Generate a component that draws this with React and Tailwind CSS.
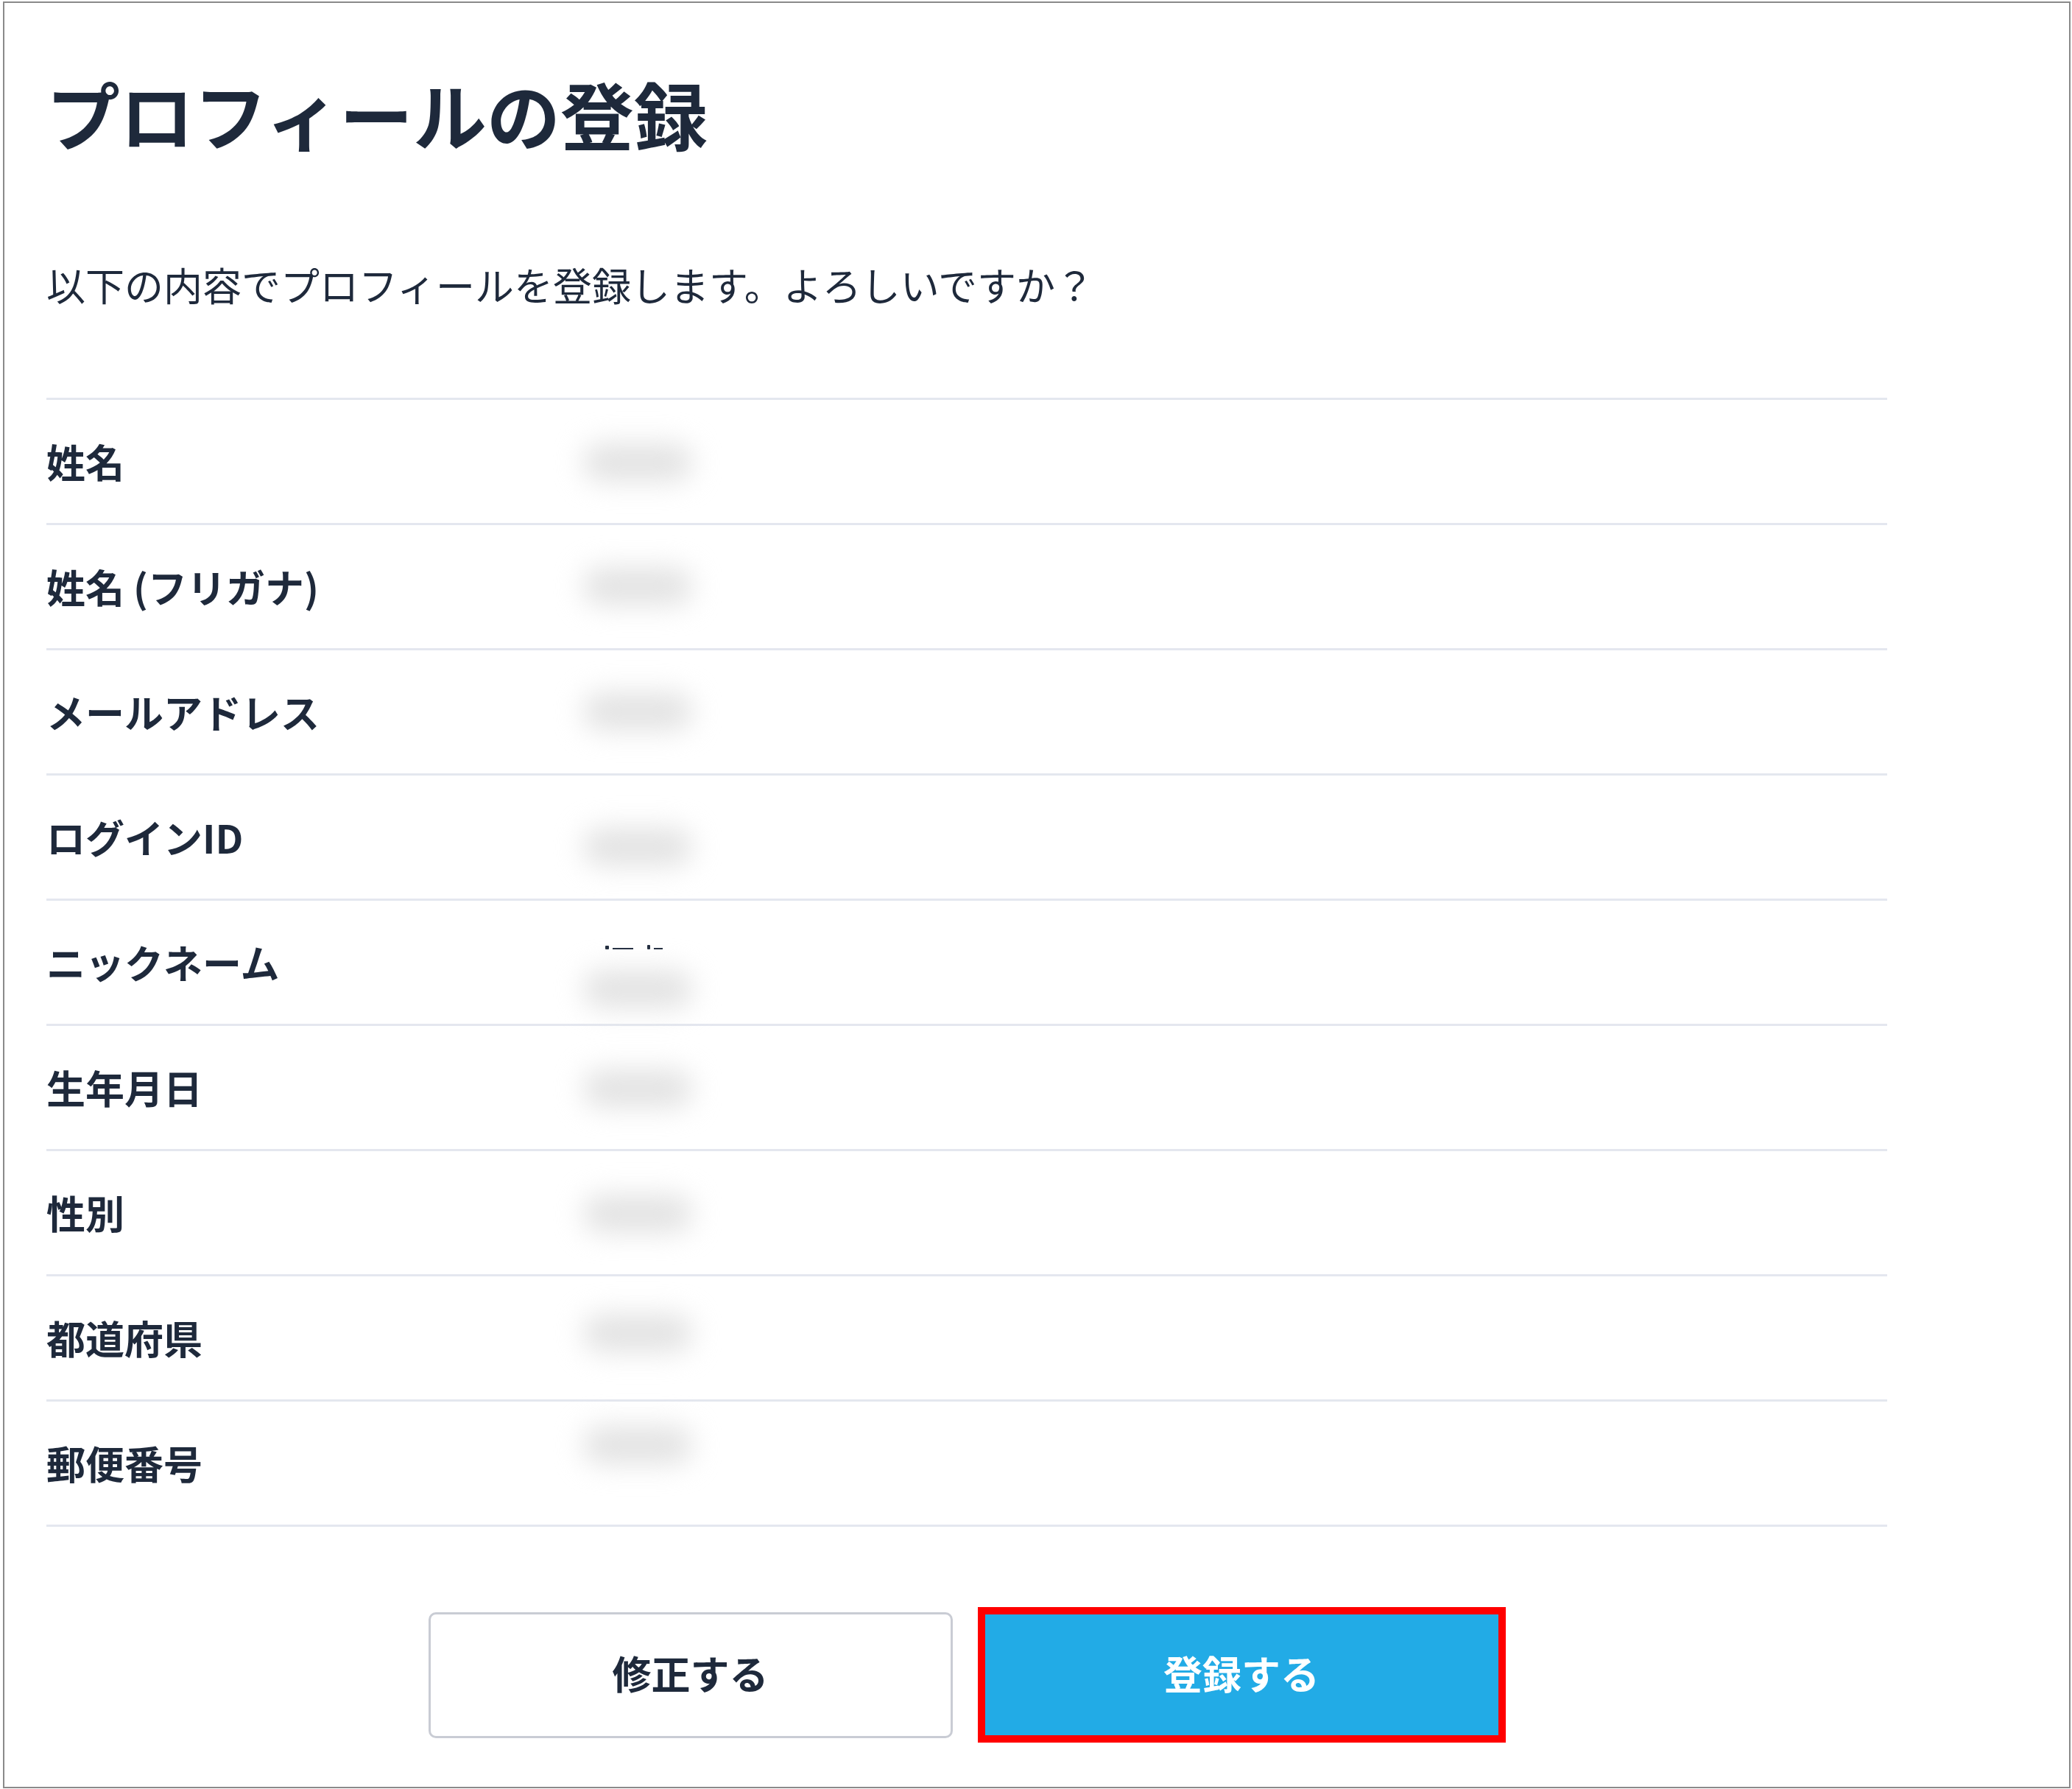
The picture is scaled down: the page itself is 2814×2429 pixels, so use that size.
import React from 'react'

const rows = [
  { label: '姓名', shift: 'mt-[2px]' },
  { label: '姓名 (フリガナ)', shift: '-mt-[2px]' },
  { label: 'メールアドレス', shift: '-mt-[2px]' },
  { label: 'ログインID', shift: 'mt-[26px]' },
  { label: 'ニックネーム', shift: 'mt-[72px]', marks: true },
  { label: '生年月日', shift: 'mt-[2px]' },
  { label: '性別', shift: 'mt-[2px]' },
  { label: '都道府県', shift: '-mt-[14px]' },
  { label: '郵便番号', shift: '-mt-[50px]' },
]

// values are blurred out in the screenshot
function Blurred({ shift, marks }){
  return (
    <div className="relative w-[152px] h-[60px] flex items-center justify-center">
      {marks && (
        <div className="absolute top-[6px] left-[32px] flex items-end gap-[5px]">
          <span className="w-[5px] h-[5px] bg-[#1e293b] rounded-[1px]" />
          <span className="w-[28px] h-[2px] bg-[#1e293b]" />
          <span className="w-[4px] h-[6px] bg-[#1e293b] ml-[14px] rounded-[1px]" />
          <span className="w-[12px] h-[2px] bg-[#1e293b]" />
        </div>
      )}
      <div className={'w-[148px] h-[52px] rounded-[24px] bg-[#e3e3e3] blur-[18px] ' + shift} />
    </div>
  )
}

export default function App(){
  return (
    <div className="w-[2814px] h-[2429px] bg-white pt-[2px] pl-[4px]" style={{ fontFamily: '"Noto Sans CJK JP", "Noto Sans", sans-serif' }}>
      <div className="w-[2808px] h-[2426px] border-2 border-[#8a8a8a] bg-white pl-[57px] pt-[100px] text-[#1e293b]">
        <h1 className="text-[100px] leading-[100px] font-bold">プロフィールの登録</h1>
        <p className="mt-[156px] text-[53px] leading-[53px] font-normal">以下の内容でプロフィールを登録します。よろしいですか？</p>

        <div className="mt-[127px] w-[2500px] border-b-[3px] border-[#e4e7ef]">
          {rows.map((r, i) => (
            <div key={i} className="h-[170px] border-t-[3px] border-[#e4e7ef] flex items-center">
              <div className="w-[727px] text-[53px] leading-[53px] font-bold">{r.label}</div>
              <Blurred shift={r.shift} marks={r.marks} />
            </div>
          ))}
        </div>

        <div className="w-[2500px] mt-[109px] flex items-center justify-center gap-[34px]">
          <button className="w-[712px] h-[171px] pb-[6px] border-[3px] border-[#c9ccd4] rounded-[10px] bg-white text-[53px] leading-[53px] font-bold text-[#1e293b]">
            修正する
          </button>
          <div className="w-[717px] h-[184px] pb-[6px] border-[10px] border-[#ff0000] bg-[#22abe6] flex items-center justify-center">
            <span className="text-[53px] leading-[53px] font-bold text-white">登録する</span>
          </div>
        </div>
      </div>
    </div>
  )
}
